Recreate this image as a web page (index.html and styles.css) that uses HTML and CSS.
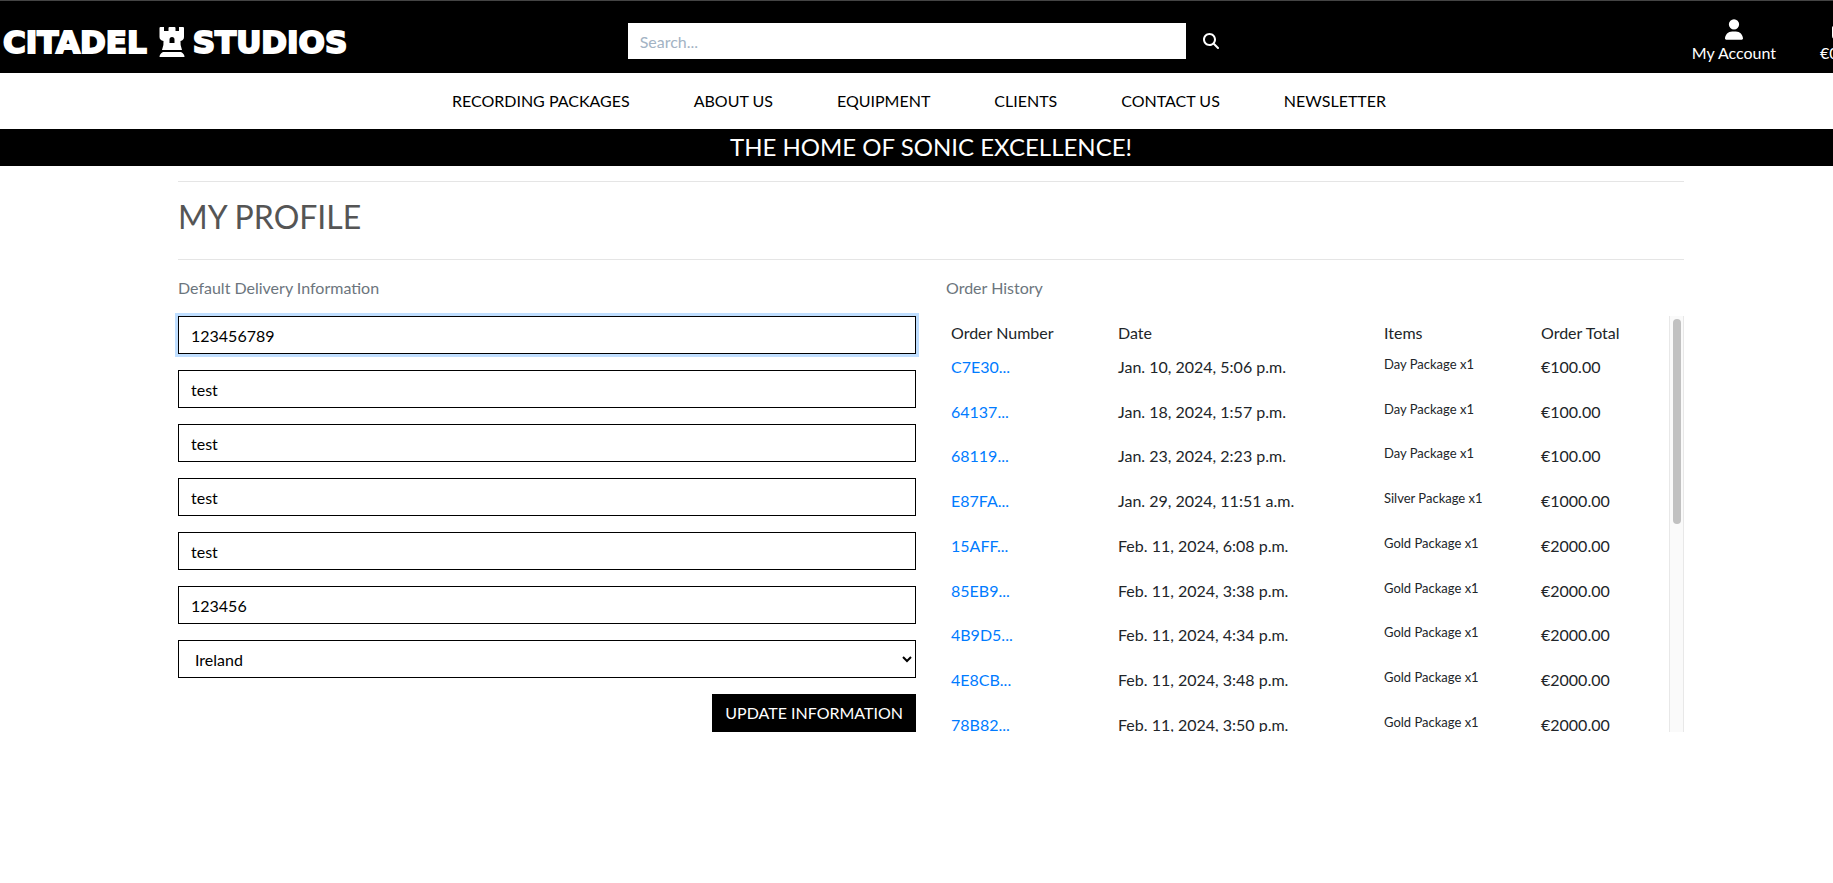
FILE: index.html
```html
<!DOCTYPE html>
<html lang="en">
<head>
<meta charset="utf-8">
<title>Citadel Studios</title>
<link rel="stylesheet" href="styles.css">
</head>
<body>
<div class="page">
  <header class="topbar">
    <a class="logo" href="#">
      <span>CITADEL</span>
      <svg class="logo-rook" viewBox="0 0 26 30" aria-hidden="true">
        <path fill="currentColor" stroke="none" fill-rule="evenodd" d="M1.500 0H5V4H9.500V1Q9.500 0 10.500 0H15.500Q16.500 0 16.500 1V4H20V0H24Q25 0 25 1V10Q25 13 21.500 14Q21 18 23 23H3Q5 18 4.500 14Q.500 13 .500 10V1Q.500 0 1.500 0ZM10.500 16H15.500V12.500Q15.500 10 13 10Q10.500 10 10.500 12.500ZM4 25H22Q25.500 27 25.500 30H.500Q.500 27 4 25Z"/>
      </svg>
      <span>STUDIOS</span>
    </a>
    <form class="search">
      <input class="search-input" type="text" placeholder="Search..." aria-label="Search">
      <button class="search-button" type="button" aria-label="Submit search">
        <svg class="search-icon" viewBox="0 0 512 512" aria-hidden="true"><path fill="currentColor" d="M416 208c0 45.900-14.900 88.300-40 122.700L502.600 457.400c12.500 12.500 12.500 32.800 0 45.300s-32.800 12.500-45.300 0L330.700 376c-34.400 25.200-76.800 40-122.700 40C93.100 416 0 322.900 0 208S93.100 0 208 0S416 93.100 416 208zM208 352a144 144 0 1 0 0-288 144 144 0 1 0 0 288z"/></svg>
      </button>
    </form>
    <div class="account">
      <a class="account-link" href="#">
        <svg class="account-icon" viewBox="0 0 448 512" aria-hidden="true"><path fill="currentColor" d="M224 256A128 128 0 1 0 224 0a128 128 0 1 0 0 256zm-45.700 48C79.800 304 0 383.800 0 482.300C0 498.700 13.300 512 29.700 512H418.300c16.400 0 29.700-13.300 29.700-29.700C448 383.800 368.200 304 269.700 304H178.300z"/></svg>
        <span>My Account</span>
      </a>
      <a class="account-link" href="#">
        <svg class="account-icon" viewBox="0 0 448 512" aria-hidden="true"><path fill="currentColor" d="M112 112v48H48c-26 0-48 22-48 48v208c0 53 43 96 96 96h256c53 0 96-43 96-96V208c0-26-22-48-48-48h-64v-48a112 112 0 0 0-224 0zm48 48v-48a64 64 0 0 1 128 0v48z"/></svg>
        <span>€0.00</span>
      </a>
    </div>
  </header>
  <nav class="nav">
    <a href="#">RECORDING PACKAGES</a>
    <a href="#">ABOUT US</a>
    <a href="#">EQUIPMENT</a>
    <a href="#">CLIENTS</a>
    <a href="#">CONTACT US</a>
    <a href="#">NEWSLETTER</a>
  </nav>
  <div class="banner">THE HOME OF SONIC EXCELLENCE!</div>
  <main class="container">
    <h1 class="title">MY PROFILE</h1>
    <div class="columns">
      <section>
        <h2 class="subtitle">Default Delivery Information</h2>
        <form class="delivery">
          <input class="field" type="text" value="123456789" aria-label="Phone number" autofocus>
          <input class="field" type="text" value="test" aria-label="Street address 1">
          <input class="field" type="text" value="test" aria-label="Street address 2">
          <input class="field" type="text" value="test" aria-label="Town or city">
          <input class="field" type="text" value="test" aria-label="County">
          <input class="field" type="text" value="123456" aria-label="Postal code">
          <select class="field" aria-label="Country"><option>Ireland</option></select>
          <button class="update" type="button">UPDATE INFORMATION</button>
        </form>
      </section>
      <section>
        <h2 class="subtitle">Order History</h2>
        <div class="history">
          <table class="orders">
            <thead>
              <tr><th class="col-number">Order Number</th><th class="col-date">Date</th><th class="col-items">Items</th><th>Order Total</th></tr>
            </thead>
            <tbody>
              <tr><td><a href="#">C7E30...</a></td><td>Jan. 10, 2024, 5:06 p.m.</td><td class="item">Day Package x1</td><td>€100.00</td></tr>
              <tr><td><a href="#">64137...</a></td><td>Jan. 18, 2024, 1:57 p.m.</td><td class="item">Day Package x1</td><td>€100.00</td></tr>
              <tr><td><a href="#">68119...</a></td><td>Jan. 23, 2024, 2:23 p.m.</td><td class="item">Day Package x1</td><td>€100.00</td></tr>
              <tr><td><a href="#">E87FA...</a></td><td>Jan. 29, 2024, 11:51 a.m.</td><td class="item">Silver Package x1</td><td>€1000.00</td></tr>
              <tr><td><a href="#">15AFF...</a></td><td>Feb. 11, 2024, 6:08 p.m.</td><td class="item">Gold Package x1</td><td>€2000.00</td></tr>
              <tr><td><a href="#">85EB9...</a></td><td>Feb. 11, 2024, 3:38 p.m.</td><td class="item">Gold Package x1</td><td>€2000.00</td></tr>
              <tr><td><a href="#">4B9D5...</a></td><td>Feb. 11, 2024, 4:34 p.m.</td><td class="item">Gold Package x1</td><td>€2000.00</td></tr>
              <tr><td><a href="#">4E8CB...</a></td><td>Feb. 11, 2024, 3:48 p.m.</td><td class="item">Gold Package x1</td><td>€2000.00</td></tr>
              <tr><td><a href="#">78B82...</a></td><td>Feb. 11, 2024, 3:50 p.m.</td><td class="item">Gold Package x1</td><td>€2000.00</td></tr>
            </tbody>
          </table>
          <div class="scrollbar" aria-hidden="true"><div class="scrollbar-thumb"></div></div>
        </div>
      </section>
    </div>
  </main>
</div>
</body>
</html>
```
FILE: styles.css
```css
*, *::before, *::after {
  box-sizing: border-box;
}

body {
  margin: 0;
  overflow: hidden;
  background: #fff;
  color: #212529;
  font-family: Lato, "Liberation Sans", sans-serif;
  font-size: 16px;
  line-height: 24px;
}

a {
  color: #007bff;
  text-decoration: none;
}

input, select, button {
  border-radius: 0;
  font: inherit;
}

/* The page runs slightly wider than the window */
.page {
  margin-right: -29px;
}

.topbar {
  display: grid;
  grid-template-columns: 1fr 1fr 1fr;
  align-items: center;
  height: 73px;
  border-top: 1px solid #444;
  background: #000;
  color: #fff;
}

.logo {
  display: flex;
  align-items: center;
  padding: 10px 0 0 3px;
  color: #fff;
  font-family: "DejaVu Sans", sans-serif;
  font-size: 31px;
  font-weight: bold;
  line-height: 36px;
  -webkit-text-stroke: 2px #fff;
}

.logo-rook {
  width: 26px;
  height: 30px;
  margin: 0 8px 0 12px;
}

.search {
  display: flex;
  align-items: center;
  padding: 8px 5px 0 7px;
}

.search-input {
  flex: 1;
  min-width: 0;
  height: 36px;
  padding: 0 12px;
  border: 0;
}

.search-input::placeholder {
  color: #a3b3c4;
}

.search-button {
  display: flex;
  justify-content: center;
  width: 50px;
  padding: 0;
  border: 0;
  background: none;
  color: #fff;
}

.search-icon {
  width: 16px;
  height: 16px;
}

.account {
  display: flex;
  justify-content: flex-end;
  gap: 44px;
  padding: 10px 1px 0 0;
}

.account-link {
  display: flex;
  flex-direction: column;
  align-items: center;
  gap: 1px;
  color: #fff;
}

.account-icon {
  width: 18px;
  height: 21px;
}

.nav {
  display: flex;
  justify-content: center;
  gap: 64px;
  padding: 16px 24px 16px 0;
}

.nav a {
  color: #000;
}

.banner {
  padding-bottom: 2px;
  background: #000;
  color: #fff;
  font-size: 24px;
  line-height: 35px;
  text-align: center;
}

.container {
  padding: 15px 178px 0;
}

.title {
  margin: 0;
  padding: 15px 0 23px;
  border: solid #e5e5e5;
  border-width: 1px 0;
  color: #555;
  font-size: 32px;
  font-weight: 400;
  line-height: 39px;
}

.columns {
  display: grid;
  grid-template-columns: 1fr 1fr;
  gap: 30px;
  padding-top: 16px;
}

.subtitle {
  margin: 0 0 16px;
  color: #6c757d;
  font-size: 16px;
  font-weight: 400;
}

.delivery {
  display: flex;
  flex-direction: column;
  gap: 16px;
}

.field {
  width: 100%;
  height: 38px;
  padding: 0 12px;
  border: 1px solid #000;
  outline: 0;
  background: #fff;
  color: #000;
}

.field:focus {
  box-shadow: 0 0 0 3px #bfdeff;
}

.update {
  align-self: flex-end;
  height: 38px;
  padding: 0 13px;
  border: 0;
  background: #000;
  color: #fff;
}

.history {
  display: flex;
  align-items: flex-start;
  height: 416px;
  overflow: hidden;
}

.orders {
  flex: 1;
  border-collapse: collapse;
  table-layout: fixed;
}

.orders th,
.orders td {
  padding: 5px 5px 0;
  text-align: left;
  vertical-align: top;
}

.orders th {
  height: 34px;
  font-weight: 400;
}

.orders td {
  height: 45px;
}

.orders tr:nth-child(4n + 2) td {
  height: 44px;
}

.orders .item {
  font-size: 13px;
  line-height: 19px;
}

.col-number {
  width: 167px;
}

.col-date {
  width: 266px;
}

.col-items {
  width: 157px;
}

.scrollbar {
  align-self: stretch;
  width: 15px;
  padding: 3px;
  border: solid #e8e8e8;
  border-width: 0 1px;
  background: #fafafa;
}

.scrollbar-thumb {
  width: 8px;
  height: 50%;
  margin: 0 auto;
  border-radius: 4px;
  background: #c1c1c1;
}
```
